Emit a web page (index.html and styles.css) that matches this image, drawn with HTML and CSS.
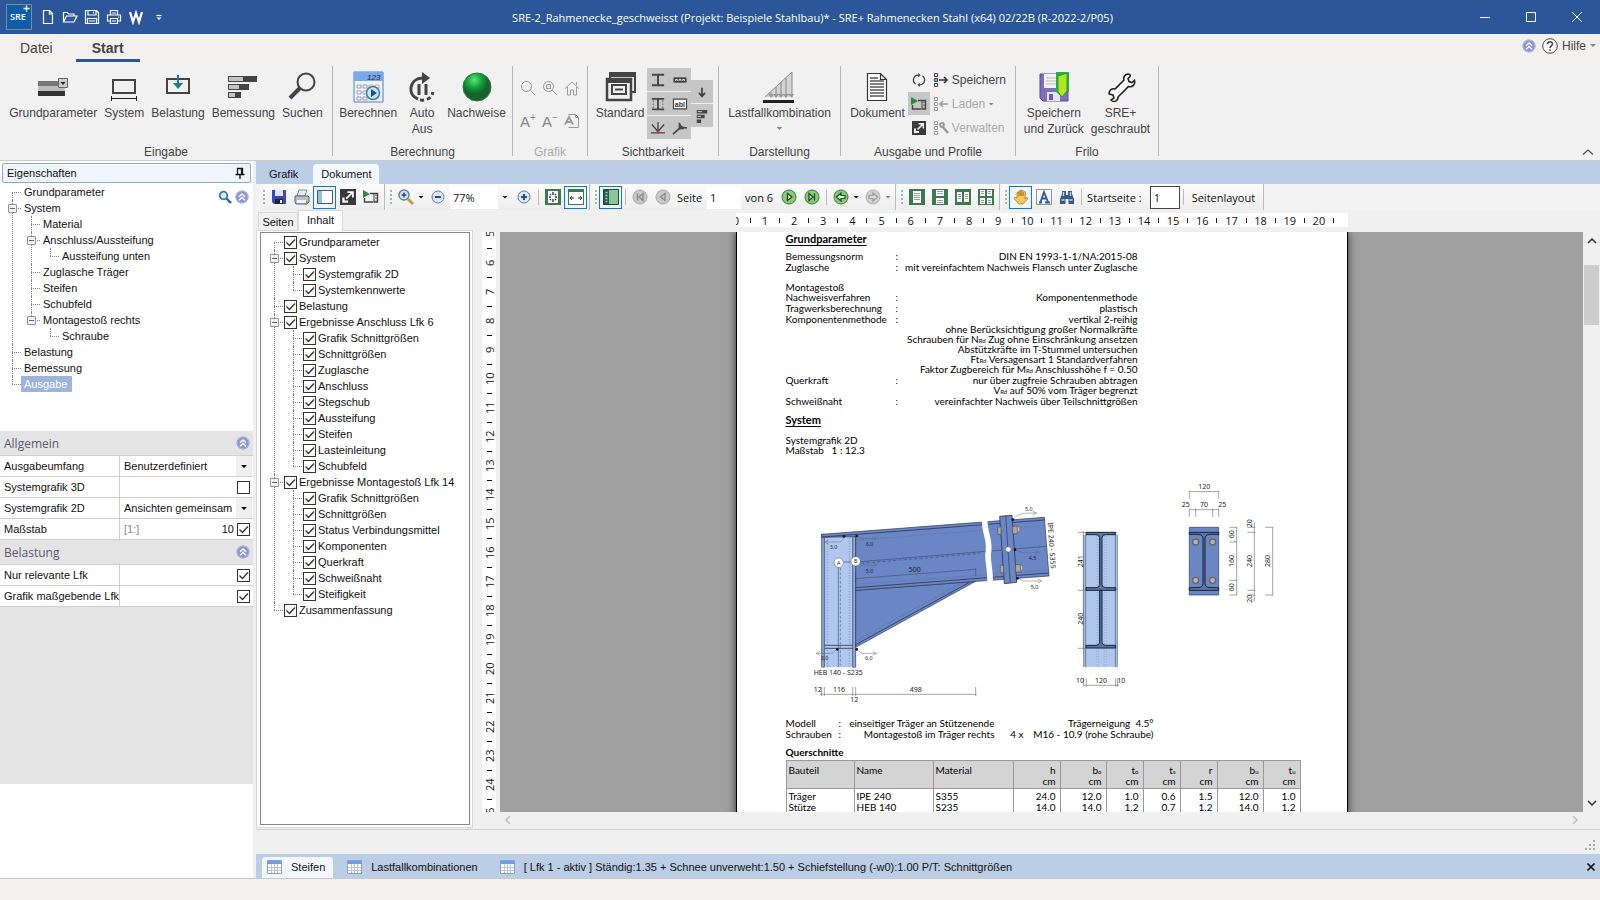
FILE: index.html
```html
<!DOCTYPE html>
<html lang="de">
<head>
<meta charset="utf-8">
<title>SRE+ Rahmenecken Stahl</title>
<link rel="stylesheet" href="styles.css">
</head>
<body>
<svg class="defs" aria-hidden="true">
  <symbol id="up2" viewBox="0 0 14 14"><circle cx="7" cy="7" r="6.5" fill="#8b97d3"/><circle cx="7" cy="7" r="6" fill="none" stroke="#a9b9e4"/><path d="M4 6.8 7 4l3 2.800M4 10.300 7 7.500l3 2.800" fill="none" stroke="#fff" stroke-width="1.400"/></symbol>
  <symbol id="grid" viewBox="0 0 16 14"><path d="M.5.5h14v13H.5z" fill="#fff" stroke="#8aa0c4"/><path d="M1 1h13v3H1z" fill="#6f9be8"/><path d="M1 7.500h13M1 10.500h13M4.500 4v9M7.500 4v9M10.500 4v9" stroke="#b8c4d8"/></symbol>
  <symbol id="play" viewBox="0 0 16 14"><path d="M0 0l7 4-7 4z" fill="#2a8a3a" stroke="none"/><path d="M1.500 8v4h9M7 3.500h7.500v8.500H11" fill="none" stroke="#444" stroke-width="1.400"/><path d="M11 3v9" stroke="#444"/><path d="M13 4.500v7" stroke="#444" stroke-dasharray="1.500 1.500"/></symbol>
  <symbol id="expand" viewBox="0 0 14 14"><path d="M0 0h14v14H0z" fill="#3a3a3a" stroke="none"/><path d="M2 7.500h2V10h3v2H2z" fill="#f4f4f4" stroke="none"/><path d="M5.500 8.500 11 3M6.500 2.700h4.800V7.500" fill="none" stroke="#fff" stroke-width="1.500"/></symbol>
</svg>

<header class="title">
  <svg class="logo" viewBox="0 0 26 26"><path d="M.5.5h25v25H.5z" fill="#0b5cad" stroke="#8a8a80"/><text x="4" y="16" font-size="9" font-weight="600" fill="#fff">SRE</text><path d="M20.500 1.500v6M17.500 4.500h6" stroke="#fff" stroke-width="1.300"/></svg>
  <nav class="quick">
    <button aria-label="Neu"><svg viewBox="0 0 16 16"><path d="M3.500 1.500h6l3 3v10h-9zM9.500 1.500v3.500h3" /></svg></button>
    <button aria-label="Öffnen"><svg viewBox="0 0 16 16"><path d="M1.500 13V3.500h4l1 1.500h5.500v2M1.500 13l3-6H15l-3 6z"/></svg></button>
    <button aria-label="Sichern"><svg viewBox="0 0 16 16"><path d="M1.500 1.500h11l2 2v11h-13zM4 1.500v4.500h8V1.500M3.500 14V9.500h9V14M9.500 2.500v2M5 12h6"/></svg></button>
    <button aria-label="Drucken"><svg viewBox="0 0 16 16"><path d="M4.500 6V1.500h7V6M4 12H1.500V6h13v6H12M4.500 9.500h7v5h-7zM6 12h4M6 4h4M12 8h1"/></svg></button>
    <button aria-label="Word"><svg viewBox="0 0 16 16"><path d="M2 3l3 10 3-9 3 9 3-10" stroke-width="2.200"/></svg></button>
    <button class="more" aria-label="Mehr"><svg viewBox="0 0 8 16"><path d="M1.500 6.500h5"/><path d="M1.500 8.500h5L4 11z" fill="#fff" stroke="none"/></svg></button>
  </nav>
  <h1>SRE-2_Rahmenecke_geschweisst (Projekt: Beispiele Stahlbau)* - SRE+ Rahmenecken Stahl (x64) 02/22B (R-2022-2/P05)</h1>
  <div class="win">
    <button aria-label="Minimieren"><svg viewBox="0 0 12 12"><path d="M1 6.500h10"/></svg></button>
    <button aria-label="Maximieren"><svg viewBox="0 0 12 12"><path d="M1.500 1.500h9v9h-9z"/></svg></button>
    <button aria-label="Schließen"><svg viewBox="0 0 12 12"><path d="M1 1l10 10M11 1 1 11"/></svg></button>
  </div>
</header>

<nav class="menu">
  <button>Datei</button><button class="on">Start</button>
  <div class="help"><svg class="i14"><use href="#up2"/></svg><svg class="i16" viewBox="0 0 16 16"><circle cx="8" cy="8" r="7.300" fill="#fff" stroke="#444"/><path d="M5.500 6.200C5.500 3 10.500 3 10.500 6c0 1.800-2.500 2-2.500 4M8 11.300v1.400" fill="none" stroke="#444" stroke-width="1.500"/></svg><button>Hilfe</button><i class="caret dim"></i></div>
</nav>

<section class="ribbon">
  <div class="grp g1"><div class="tools">
    <button><svg viewBox="0 0 32 32"><path d="M1 10h21v5H1z" fill="#777"/><path d="M1 15h27v5H1z" fill="#bdbdbd"/><path d="M1 20h27v5H1z" fill="#333"/><path d="M21.500 7.500h9v9h-9z" fill="#ccc" stroke="#666"/><path d="M23.500 11h5L26 14z" fill="#222"/></svg>Grundparameter</button>
    <button><svg viewBox="0 0 32 32"><path d="M5 9h22v13H5z" fill="none" stroke="#444" stroke-width="2"/><path d="M3.500 25v5M28.500 25v5M4 27.500h24" stroke="#222"/></svg>System</button>
    <button><svg viewBox="0 0 32 32"><path d="M5 8h22v14H5z" fill="none" stroke="#444" stroke-width="2"/><path d="M16 4v11" stroke="#188080" stroke-width="2"/><path d="M11 12h10l-5 6z" fill="#188080"/></svg>Belastung</button>
    <button><svg viewBox="0 0 32 32"><path d="M1 5h29v6H1zM1 13h21v6H1zM1 21h13v6H1z" fill="#444"/><path d="M2 6h14v4H2zM2 14h10v4H2zM2 22h6v4H2z" fill="#c4c4c4"/></svg>Bemessung</button>
    <button><svg viewBox="0 0 32 32"><circle cx="20" cy="11" r="8.500" fill="none" stroke="#444" stroke-width="2"/><path d="M14 17 4 27" stroke="#444" stroke-width="4"/></svg>Suchen</button>
  </div><h2>Eingabe</h2></div>
  <div class="grp g2"><div class="tools">
    <button><svg viewBox="0 0 32 32"><path d="M2 1h29v30H2z" fill="#eef4ff" stroke="#4a80cc"/><path d="M2 1h29v9H2z" fill="#78a8ee"/><text x="15" y="8.500" font-size="8" font-style="italic" fill="#124">123</text><path d="M5 14h4v3H5zM11 14h4v3h-4zM5 20h4v3H5zM11 20h4v3h-4zM5 26h4v3H5zM11 26h4v3h-4z" fill="#fff" stroke="#99a"/><path d="M17 14h4v3h-4zM23 14h4v3h-4z" fill="#fff" stroke="#e8a860"/><circle cx="21" cy="22" r="6.500" fill="#cfe6fa" stroke="#3a78b8" stroke-width="1.500"/><path d="M19 18l6 4-6 4z" fill="#1c4f90"/></svg>Berechnen</button>
    <button><svg viewBox="0 0 32 32"><path d="M12 28C1 24 3 8 16 7" fill="none" stroke="#444" stroke-width="3"/><path d="M16 1l8 6-8 6z" fill="#444"/><path d="M13 13v11M20 13v11" stroke="#444" stroke-width="3"/><path d="M14 29c8 1 12-3 13-8" fill="none" stroke="#444" stroke-width="3" stroke-dasharray="4 3"/></svg>Auto<br>Aus</button>
    <button><svg viewBox="0 0 32 32"><defs><radialGradient id="gr" cx=".4" cy=".25"><stop offset="0" stop-color="#5fe685"/><stop offset=".5" stop-color="#14a83c"/><stop offset="1" stop-color="#17622a"/></radialGradient></defs><circle cx="16" cy="16" r="14" fill="url(#gr)" stroke="#2b7a3c"/></svg>Nachweise</button>
  </div><h2>Berechnung</h2></div>
  <div class="grp g3"><div class="tools minis dimmed">
    <button aria-label="Zoom"><svg viewBox="0 0 16 16"><circle cx="6.500" cy="6.500" r="5" /><path d="M10 10l5 5"/></svg></button>
    <button aria-label="Zoom Fenster"><svg viewBox="0 0 16 16"><circle cx="6.500" cy="6.500" r="5"/><path d="M10 10l5 5M4.500 4.500h4v4h-4z"/></svg></button>
    <button aria-label="Alles"><svg viewBox="0 0 16 16"><path d="M1 8.500 8 2l7 6.500M3.500 7v8h3v-5h3v5h3V7M12.500 2v3"/></svg></button>
    <button class="aa">A<sup>+</sup></button><button class="aa">A<sup>−</sup></button>
    <button aria-label="Schrift"><svg viewBox="0 0 16 16"><path d="M4.500 1.500h7l3 3v10h-10M11.500 1.500v3h3"/><path d="M1 11.500 5 4l4 7.500M3 9h4" stroke-width="1.800"/></svg></button>
  </div><h2 class="dim">Grafik</h2></div>
  <div class="grp g4"><div class="tools">
    <button><svg viewBox="0 0 32 32"><path d="M6 2h25v19H6z" fill="none" stroke="#444" stroke-width="2"/><path d="M6 2h25v4H6z" fill="#444"/><path d="M3 8h24v21H3z" fill="#f1f1f1" stroke="#444" stroke-width="2.500"/><path d="M3 8h24v4H3z" fill="#444"/><path d="M8 14h14v9H8z" fill="none" stroke="#444" stroke-width="2"/><path d="M11 18.500h8" stroke="#444" stroke-width="2"/></svg>Standard</button>
    <div class="vis">
      <button class="on" aria-label="Profil"><svg viewBox="0 0 16 16"><path d="M1 2h14M1 14h14M8 2v12" stroke-width="2.200"/></svg></button>
      <button class="on" aria-label="Maße"><svg viewBox="0 0 16 16"><path d="M1 5.500h14v5H1z" fill="#444"/><path d="M3 9V7.500h2V9M7 9V7.500h2V9M11 9V7.500h2V9" stroke="#fff"/></svg></button>
      <button class="on" aria-label="Profil Bemaßung"><svg viewBox="0 0 16 16"><path d="M1 2h14M1 14h14M8 2v12" stroke-width="2"/><path d="M2.500 4v9M13.500 4v9" stroke-dasharray="1.500 2"/></svg></button>
      <button class="on" aria-label="Beschriftung"><svg viewBox="0 0 16 16"><path d="M.5 2.500h15v11H.5z" fill="#fff" stroke-width="1.300"/><text x="2" y="11" font-size="8" font-weight="bold" fill="#333" stroke="none">abl</text></svg></button>
      <button class="on" aria-label="Schnitt"><svg viewBox="0 0 16 16"><path d="M0 13.500h16M8 1v11M1 4l7 8 7-8" stroke-width="1.500"/><path d="M6 11h4l-2 4z" fill="#c33" stroke="none"/></svg></button>
      <button class="on" aria-label="Naht"><svg viewBox="0 0 16 16"><path d="M0 15 9 7l7 1" stroke-width="2"/><path d="M7 2v7h5z" fill="#444"/></svg></button>
    </div>
    <div class="vis one">
      <button class="on" aria-label="Last"><svg viewBox="0 0 16 16"><path d="M8 3v10M4.500 9 8 13l3.500-4" stroke-width="2"/></svg></button>
      <button class="on" aria-label="Ausnutzung"><svg viewBox="0 0 16 16"><path d="M2 1h12v4H2zM2 6.500h9v4H2zM2 12h5v4H2z" fill="#444" stroke="none"/><path d="M3 3h5M3 8.500h4"  stroke="#ddd"/></svg></button>
    </div>
  </div><h2>Sichtbarkeit</h2></div>
  <div class="grp g5"><div class="tools">
    <button><svg viewBox="0 0 32 32"><path d="M2 26 29 1v25z" fill="#d4d4d4"/><path d="M2 26 29 1M8 21v5M13 16v10M18 11v15M23 7v19M29 1v25" stroke="#888" fill="none"/><path d="M5 23l3 4 3-4zM10 23l3 4 3-4zM15 23l3 4 3-4zM20 23l3 4 3-4zM25 23l4 4 2-4z" fill="#999"/><path d="M0 29h31v3H0z" fill="#222"/></svg>Lastfallkombination<i class="caret dim"></i></button>
  </div><h2>Darstellung</h2></div>
  <div class="grp g6"><div class="tools">
    <button><svg viewBox="0 0 32 32"><path d="M6.500 2.500h13l6 6v21h-19zM19.500 2.500v6h6" fill="#fff" stroke="#333" stroke-width="1.200"/><path d="M9 7h8M9 10h14M9 13h14M9 16h14M9 19h14M9 22h14M9 25h14" stroke="#555" stroke-width="1.300"/></svg>Dokument</button>
    <div class="vis one top">
      <button aria-label="Aktualisieren"><svg viewBox="0 0 16 16"><path d="M7 2.500a5.500 5.500 0 0 0-3 10M9 13.500a5.500 5.500 0 0 0 3-10" stroke-width="1.500"/><path d="M7 0v5l3-2.500zM9 11v5l-3-2.500z" fill="#444" stroke="none"/></svg></button>
      <button class="on" aria-label="Ausgeben"><svg><use href="#play"/></svg></button>
      <button aria-label="Vollbild"><svg><use href="#expand"/></svg></button>
    </div>
    <div class="prof">
      <button><svg viewBox="0 0 16 16"><path d="M1.500 1.500h3v3h-3zM1.500 11.500h3v3h-3z" fill="#fff" stroke="#444"/><path d="M1.500 6.500h3v3h-3z" fill="#58b0e8" stroke="#444"/><path d="M6 8h8M11 5l3 3-3 3" fill="none" stroke="#333" stroke-width="1.600"/></svg>Speichern</button>
      <button class="dim"><svg viewBox="0 0 16 16"><path d="M1.500 1.500h3v3h-3zM1.500 11.500h3v3h-3zM1.500 6.500h3v3h-3z" fill="#fff" stroke="#999"/><path d="M7 8h8M10 5 7 8l3 3" fill="none" stroke="#999" stroke-width="1.600"/></svg>Laden<i class="caret dim"></i></button>
      <button class="dim"><svg viewBox="0 0 16 16"><path d="M1.500 1.500h3v3h-3zM1.500 11.500h3v3h-3zM1.500 6.500h3v3h-3z" fill="#fff" stroke="#999"/><path d="M9 6l6 7" stroke="#999" stroke-width="2.500"/><circle cx="9" cy="5" r="2" fill="none" stroke="#999" stroke-width="1.800"/></svg>Verwalten</button>
    </div>
  </div><h2>Ausgabe und Profile</h2></div>
  <div class="grp g7"><div class="tools">
    <button><svg viewBox="0 0 32 32"><path d="M2 3h28v27H5l-3-3z" fill="#7f6fb8" stroke="#5a4a98"/><path d="M6 3h16v14H6z" fill="#f2f2f8"/><path d="M8 7h12M8 10h12M8 13h12" stroke="#bbb"/><path d="M9 21h13v9H9z" fill="#e4e4ee"/><path d="M11 23h4v6h-4z" fill="#6a5aa8"/><path d="M18 1h13v20h-6z" fill="#2faa48"/><path d="M18 1v20l6 5V8l7-4V1z" fill="#2faa48"/><path d="M20 5l9-3v18l-5 6-4-5z" fill="#b4e61e" stroke="#22a040"/></svg>Speichern<br>und Zurück</button>
    <button><svg viewBox="0 0 32 32"><path d="M21 3.500c3-1 5 0 4 2l-2 2 1 3 3 1 2.500-2c1 4-2 7-6 6L13 26c0 4-4 6-7 3l3-2-1-3-4-1c0-4 3-6 6-5L19 9c-1-3 0-4 2-5.500z" fill="#fff" stroke="#222" stroke-width="1.600"/></svg>SRE+<br>geschraubt</button>
  </div><h2>Frilo</h2></div>
  <button class="fold" aria-label="Menüband einklappen"><svg viewBox="0 0 12 8"><path d="M1 6.500 6 2l5 4.500" fill="none" stroke="#555" stroke-width="1.300"/></svg></button>
</section>

<main class="work">
<aside class="props">
  <h2 class="cap">Eigenschaften<svg viewBox="0 0 12 12"><path d="M3.500 7V1.500h5V7M1.500 7.500h9M6 8v4M7.500 2v5" fill="none" stroke="#111" stroke-width="1.300"/></svg></h2>
  <div class="nav">
    <div class="find"><svg class="i14" viewBox="0 0 14 14"><circle cx="5.500" cy="5.500" r="3.800" fill="#dff0fc" stroke="#2f78c4" stroke-width="1.800"/><path d="M8.500 8.500 13 13" stroke="#2a5fa8" stroke-width="2.400"/></svg><svg class="i14"><use href="#up2"/></svg></div>
    <ul class="tree">
      <li><a href="#">Grundparameter</a></li>
      <li><button class="ex" aria-label="Zuklappen"></button><a href="#">System</a>
        <ul>
          <li><a href="#">Material</a></li>
          <li><button class="ex" aria-label="Zuklappen"></button><a href="#">Anschluss/Aussteifung</a><ul><li><a href="#">Aussteifung unten</a></li></ul></li>
          <li><a href="#">Zuglasche Träger</a></li>
          <li><a href="#">Steifen</a></li>
          <li><a href="#">Schubfeld</a></li>
          <li><button class="ex" aria-label="Zuklappen"></button><a href="#">Montagestoß rechts</a><ul><li><a href="#">Schraube</a></li></ul></li>
        </ul></li>
      <li><a href="#">Belastung</a></li>
      <li><a href="#">Bemessung</a></li>
      <li><a href="#" class="sel">Ausgabe</a></li>
    </ul>
  </div>
  <h3>Allgemein<svg class="i14"><use href="#up2"/></svg></h3>
  <div class="row"><label for="p1">Ausgabeumfang</label><div><select id="p1"><option>Benutzerdefiniert</option></select></div></div>
  <div class="row"><label for="p2">Systemgrafik 3D</label><div><input type="checkbox" id="p2"></div></div>
  <div class="row"><label for="p3">Systemgrafik 2D</label><div><select id="p3"><option>Ansichten gemeinsam</option></select></div></div>
  <div class="row"><label for="p4">Maßstab</label><div><span class="unit">[1:]</span><input class="num" aria-label="Maßstab Wert" value="10"><input type="checkbox" id="p4" checked></div></div>
  <h3>Belastung<svg class="i14"><use href="#up2"/></svg></h3>
  <div class="row"><label for="p5">Nur relevante Lfk</label><div><input type="checkbox" id="p5" checked></div></div>
  <div class="row"><label for="p6">Grafik maßgebende Lfk</label><div><input type="checkbox" id="p6" checked></div></div>
  <div class="void"></div>
</aside>

<section class="main">
  <nav class="tabs"><button>Grafik</button><button class="on">Dokument</button></nav>
  <div class="bar">
    <div class="tg"><i class="grip"></i>
      <button aria-label="Speichern"><svg viewBox="0 0 16 16"><path d="M1 1h14v14H3l-2-2z" fill="#3b49b8"/><path d="M4 1h8v6H4z" fill="#dfe6fa"/><path d="M4 10h8v5H4z" fill="#223"/><path d="M9 11h2v3H9z" fill="#fff"/></svg></button>
      <button aria-label="Drucken"><svg viewBox="0 0 16 16"><path d="M5 1h8l-2 6H3z" fill="#e4effc" stroke="#7a8aa0"/><path d="M1 7h13l1 1v5l-2 2H2l-1-2z" fill="#b9c0ca" stroke="#5c6470"/><path d="M3 11h9v3H3z" fill="#f2f2f2"/><path d="M12 12h2v2h-2z" fill="#6c3"/></svg></button>
      <button class="on" aria-label="Seitenleiste"><svg viewBox="0 0 16 16"><path d="M.5 1.500h15v13H.5z" fill="#fff" stroke="#555"/><path d="M1 2h4v12H1z" fill="#8cc4e0"/></svg></button>
      <button aria-label="Vollbild"><svg><use href="#expand"/></svg></button>
      <button aria-label="Ausgeben"><svg><use href="#play"/></svg></button>
    </div>
    <div class="tg"><i class="grip"></i>
      <button aria-label="Vergrößern"><svg viewBox="0 0 16 16"><circle cx="6" cy="6" r="5" fill="#d8e8f8" stroke="#6a7f9c" stroke-width="1.500"/><path d="M3.500 6h5M6 3.500v5" stroke="#234f90" stroke-width="1.500"/><path d="M10 10l5 5" stroke="#c89a3c" stroke-width="2.800"/></svg></button>
      <i class="caret"></i>
      <button aria-label="Kleiner"><svg viewBox="0 0 16 16"><circle cx="8" cy="8" r="6" fill="#dde8f6" stroke="#6a7890"/><path d="M5 8h6" stroke="#234f90" stroke-width="2"/></svg></button>
      <input class="z" aria-label="Zoom" value="77%"><i class="caret wide"></i>
      <button aria-label="Größer"><svg viewBox="0 0 16 16"><circle cx="8" cy="8" r="6" fill="#dde8f6" stroke="#6a7890"/><path d="M5 8h6M8 5v6" stroke="#234f90" stroke-width="2"/></svg></button>
      <i class="sep"></i>
      <button aria-label="Ganze Seite"><svg viewBox="0 0 16 16"><path d="M0 0h16v16H0z" fill="#3c7a4c"/><path d="M3 2h10v12H3z" fill="#fff"/><path d="M8 3v3M8 10v3M4 8h2M10 8h2M5 5l1 1M11 5l-1 1M5 11l1-1M11 11l-1-1" stroke="#333" stroke-width="1.400"/></svg></button>
      <button class="on" aria-label="Seitenbreite"><svg viewBox="0 0 16 16"><path d="M0 0h16v16H0z" fill="#3c7a4c"/><path d="M1 3h14v12H1z" fill="#fff"/><path d="M2 9h4M10 9h4M4 7 2 9l2 2M12 7l2 2-2 2" fill="none" stroke="#333"/></svg></button>
    </div>
    <div class="tg"><i class="grip"></i>
      <button class="on" aria-label="Gliederung"><svg viewBox="0 0 16 16"><path d="M.5.5h15v15H.5z" fill="#8fc49a" stroke="#1c4c30"/><path d="M1 1h5v14H1z" fill="#255c48"/><path d="M2.500 3.500h2M2.500 6.500h2M2.500 9.500h2M2.500 12.500h2" stroke="#9cc8e8" stroke-width="1.500"/></svg></button>
      <i class="sep"></i>
      <button aria-label="Erste Seite"><svg viewBox="0 0 16 16"><circle cx="8" cy="8" r="7" fill="#c8c8c8" stroke="#a8a8a8"/><path d="M5.500 4.500v7M11 4.500 7 8l4 3.500z" fill="none" stroke="#888" stroke-width="1.300"/></svg></button>
      <button aria-label="Vorige Seite"><svg viewBox="0 0 16 16"><circle cx="8" cy="8" r="7" fill="#c8c8c8" stroke="#a8a8a8"/><path d="M10 4.500 5.500 8l4.500 3.500z" fill="none" stroke="#888" stroke-width="1.300"/></svg></button>
      <label for="pg">Seite</label><input class="p" id="pg" value="1"><span>von 6</span>
      <button aria-label="Nächste Seite"><svg viewBox="0 0 16 16"><circle cx="8" cy="8" r="7" fill="#8cc878" stroke="#3c7a3c"/><path d="M6.500 4.500 11 8l-4.500 3.500z" fill="#dff2d4" stroke="#1c4c20" stroke-width="1.300"/></svg></button>
      <button aria-label="Letzte Seite"><svg viewBox="0 0 16 16"><circle cx="8" cy="8" r="7" fill="#8cc878" stroke="#3c7a3c"/><path d="M5 4.500 9 8l-4 3.500zM10.500 4.500v7" fill="#dff2d4" stroke="#1c4c20" stroke-width="1.300"/></svg></button>
      <i class="sep"></i>
      <button aria-label="Zurück"><svg viewBox="0 0 16 16"><circle cx="8" cy="8" r="7" fill="#8cc878" stroke="#3c7a3c"/><path d="M3.500 8 8 4v2.500h4v3H8V12z" fill="#eaf6e4" stroke="#1c4c20" stroke-width="1.200"/></svg></button><i class="caret"></i>
      <button aria-label="Vor"><svg viewBox="0 0 16 16"><circle cx="8" cy="8" r="7" fill="#cfcfcf" stroke="#b0b0b0"/><path d="M12.500 8 8 4v2.500H4v3h4V12z" fill="#ddd" stroke="#999" stroke-width="1.200"/></svg></button><i class="caret dim"></i>
    </div>
    <div class="tg"><i class="grip"></i>
      <button aria-label="Einzelseite"><svg viewBox="0 0 16 16"><path d="M0 0h16v16H0z" fill="#3c7a4c"/><path d="M4 2h8v12H4z" fill="#fff"/><path d="M5 4.500h6M5 6.500h6M5 8.500h6M5 10.500h6" stroke="#99a"/></svg></button>
      <button aria-label="Fortlaufend"><svg viewBox="0 0 16 16"><path d="M0 0h16v16H0z" fill="#3c7a4c"/><path d="M4 1h8v6H4zM4 9h8v6H4z" fill="#fff"/><path d="M5 2.500h6M5 4.500h6M5 11.500h6M5 13.500h6" stroke="#99a"/></svg></button>
      <button aria-label="Doppelseite"><svg viewBox="0 0 16 16"><path d="M0 0h16v16H0z" fill="#3c7a4c"/><path d="M2 3h5v10H2zM9 3h5v10H9z" fill="#fff"/><path d="M3 5.500h3M3 7.500h3M3 9.500h3M10 5.500h3M10 7.500h3M10 9.500h3" stroke="#99a"/></svg></button>
      <button aria-label="Vier Seiten"><svg viewBox="0 0 16 16"><path d="M0 0h16v16H0z" fill="#3c7a4c"/><path d="M2 1h5v6H2zM9 1h5v6H9zM2 9h5v6H2zM9 9h5v6H9z" fill="#fff"/><path d="M3 2.500h3M3 4.500h3M10 2.500h3M10 4.500h3M3 11.500h3M3 13.500h3M10 11.500h3M10 13.500h3" stroke="#99a"/></svg></button>
    </div>
    <div class="tg"><i class="grip"></i>
      <button class="on" aria-label="Hand"><svg viewBox="0 0 16 16"><path d="M4 9V3.500q1-1 2 0V7 2q1-1 2 0v5-5.500q1-1 2 0V7l.5-4q1-1 2 0l-.5 7 1.500-1.500q1.500 0 1 1.500L10 15H6L1 9.500q0-1.500 1.500-1z" fill="#f4c860" stroke="#b07818" stroke-width=".8"/></svg></button>
      <button aria-label="Text wählen"><svg viewBox="0 0 16 16"><path d="M.5.5h15v15H.5z" fill="none" stroke="#333" stroke-dasharray="1 1"/><path d="M3 13.500h3M9 13.500h5M4.500 13 8 3l4 10M6 9.500h4.500" fill="none" stroke="#2c5ca8" stroke-width="1.800"/></svg></button>
      <button aria-label="Suchen"><svg viewBox="0 0 16 16"><path d="M3 2h4v4h2V2h4v3l2 5v5h-5.500v-5h-3v5H1v-5l2-5z" fill="#35588f"/><path d="M2.500 11h3M10.500 11h3M4.500 3v4M11.500 3v4" stroke="#c8daf2" stroke-width="1.400"/></svg></button>
      <i class="sep"></i><label for="sp">Startseite :</label><input class="s" id="sp" value="1"><i class="sep"></i><span>Seitenlayout</span>
    </div>
  </div>

  <div class="body">
    <div class="side">
      <nav class="stabs"><button>Seiten</button><button class="on">Inhalt</button></nav>
      <div class="sheet"><div class="toc">
        <ul class="tree">
          <li><label><input type="checkbox" checked>Grundparameter</label></li>
          <li><button class="ex" aria-label="Zuklappen"></button><label><input type="checkbox" checked>System</label>
            <ul><li><label><input type="checkbox" checked>Systemgrafik 2D</label></li><li><label><input type="checkbox" checked>Systemkennwerte</label></li></ul></li>
          <li><label><input type="checkbox" checked>Belastung</label></li>
          <li><button class="ex" aria-label="Zuklappen"></button><label><input type="checkbox" checked>Ergebnisse Anschluss Lfk 6</label>
            <ul>
              <li><label><input type="checkbox" checked>Grafik Schnittgrößen</label></li>
              <li><label><input type="checkbox" checked>Schnittgrößen</label></li>
              <li><label><input type="checkbox" checked>Zuglasche</label></li>
              <li><label><input type="checkbox" checked>Anschluss</label></li>
              <li><label><input type="checkbox" checked>Stegschub</label></li>
              <li><label><input type="checkbox" checked>Aussteifung</label></li>
              <li><label><input type="checkbox" checked>Steifen</label></li>
              <li><label><input type="checkbox" checked>Lasteinleitung</label></li>
              <li><label><input type="checkbox" checked>Schubfeld</label></li>
            </ul></li>
          <li><button class="ex" aria-label="Zuklappen"></button><label><input type="checkbox" checked>Ergebnisse Montagestoß Lfk 14</label>
            <ul>
              <li><label><input type="checkbox" checked>Grafik Schnittgrößen</label></li>
              <li><label><input type="checkbox" checked>Schnittgrößen</label></li>
              <li><label><input type="checkbox" checked>Status Verbindungsmittel</label></li>
              <li><label><input type="checkbox" checked>Komponenten</label></li>
              <li><label><input type="checkbox" checked>Querkraft</label></li>
              <li><label><input type="checkbox" checked>Schweißnaht</label></li>
              <li><label><input type="checkbox" checked>Steifigkeit</label></li>
            </ul></li>
          <li><label><input type="checkbox" checked>Zusammenfassung</label></li>
        </ul>
      </div></div>
    </div>
    <div class="viewer">
      <div class="hr"><div class="hrin"><b>0</b><i></i><b>1</b><i></i><b>2</b><i></i><b>3</b><i></i><b>4</b><i></i><b>5</b><i></i><b>6</b><i></i><b>7</b><i></i><b>8</b><i></i><b>9</b><i></i><b>10</b><i></i><b>11</b><i></i><b>12</b><i></i><b>13</b><i></i><b>14</b><i></i><b>15</b><i></i><b>16</b><i></i><b>17</b><i></i><b>18</b><i></i><b>19</b><i></i><b>20</b><i></i></div></div>
      <div class="vr"><div class="vrin"><b>5</b><i></i><b>6</b><i></i><b>7</b><i></i><b>8</b><i></i><b>9</b><i></i><b>10</b><i></i><b>11</b><i></i><b>12</b><i></i><b>13</b><i></i><b>14</b><i></i><b>15</b><i></i><b>16</b><i></i><b>17</b><i></i><b>18</b><i></i><b>19</b><i></i><b>20</b><i></i><b>21</b><i></i><b>22</b><i></i><b>23</b><i></i><b>24</b><i></i><b>25</b></div></div>
      <div class="canvas">
        <article class="page">
          <h2>Grundparameter</h2>
          <dl>
            <dt>Bemessungsnorm</dt><dd>DIN EN 1993-1-1/NA:2015-08</dd>
            <dt>Zuglasche</dt><dd>mit vereinfachtem Nachweis Flansch unter Zuglasche</dd>
          </dl>
          <p class="sub">Montagestoß</p>
          <dl>
            <dt>Nachweisverfahren</dt><dd>Komponentenmethode</dd>
            <dt>Tragwerksberechnung</dt><dd>plastisch</dd>
            <dt>Komponentenmethode</dt><dd>vertikal 2-reihig<br>ohne Berücksichtigung großer Normalkräfte<br>Schrauben für N<sub>Rd</sub> Zug ohne Einschränkung ansetzen<br>Abstützkräfte im T-Stummel untersuchen<br>Ft<sub>Rd</sub> Versagensart 1 Standardverfahren<br>Faktor Zugbereich für M<sub>Rd</sub> Anschlusshöhe f = 0.50</dd>
            <dt>Querkraft</dt><dd>nur über zugfreie Schrauben abtragen<br>V<sub>Rd</sub> auf 50% vom Träger begrenzt</dd>
            <dt>Schweißnaht</dt><dd>vereinfachter Nachweis über Teilschnittgrößen</dd>
          </dl>
          <h2>System</h2>
          <p>Systemgrafik 2D<br>Maßstab &nbsp; 1 : 12.3</p>
          <svg class="draw" viewBox="18 0 1602 720" role="img" aria-label="Systemgrafik 2D">
            <g stroke="#2c3850" stroke-width="2">
              <path d="M125 190h102v399H125z" fill="#b0c8ee" stroke="none"/>
              <path d="M125 190h8v399h-8zM218 190h9v399h-9z" fill="#8ea9d8"/>
              <path d="M133 523h85M133 532h85" stroke-width="2.500"/>
              <path d="M142 200v389M208 200v389" stroke="#6f86b4" stroke-dasharray="4 4"/>
              <path d="M181 278v311" stroke="#50648c" stroke-dasharray="8 5"/><path d="M175 275v314" stroke="#44587e"/>
              <path d="M125 589h102" stroke="#fff" stroke-dasharray="5 4"/>
              <path d="M227 358 587 331 227 529z" fill="#6a86c4"/>
              <path d="M227 521 572 332" stroke-width="2.500"/><path d="M227 510 545 336" stroke="#50689c" stroke-dasharray="4 4"/>
              <path d="M125 190 793 139 807 315 227 358V197L125 199z" fill="#6a86c4"/>
              <path d="M125 198 794 147M227 350 806 306" stroke-width="2.500"/>
              <path d="M230 207 795 164M230 340 800 297" stroke="#50689c" stroke-dasharray="4 5"/>
              <path d="M190 273h40L800 226" fill="none" stroke="#3c5080"/><path d="M227 278 600 247" stroke="#3c5080" stroke-dasharray="10 6"/>
              <path d="M614 146c-2 40 20 60 10 105 0 30 8 50 6 84" fill="none" stroke="#fff" stroke-width="17"/>
              <path d="M659 136l37-3 14 201-37 4z" fill="#6a86c4" stroke-width="2.500"/><path d="M677 135l14 201"/>
              <path d="M653 168h10v22h-10zM698 166h14v22h-14zM661 283h10v22h-10zM707 281h14v22h-14z" fill="#b0aaa4" stroke="#555"/>
              <path d="M713 168h6v14h-6zM722 284h6v14h-6z" fill="#ccc" stroke="#777"/>
              <g fill="none" stroke="#667" stroke-width="1.500">
                <path d="M192 196c-4 14-10 17-20 17h-36M229 194l16 8h42M229 270l16 12h42M700 146c10-16 20-20 68-20M705 236l20 8h50M712 322l18 8h52M172 535l-16 12h-45M229 535l16 12h42"/>
                <path d="M146 206l-12 7 12 7M278 196l12 6-12 6M278 276l12 6-12 6M758 120l12 6-12 6M766 238l12 6-12 6M774 324l12 6-12 6M120 541l-12 6 12 6M278 541l12 6-12 6"/>
              </g>
              <path d="M225 323 587 295M227 310v25M587 290v26" stroke="#33456c" stroke-width="1.500"/>
            </g>
            <g fill="#fff" stroke="#556" stroke-width="1.500"><circle cx="176" cy="275" r="14"/><circle cx="227" cy="271" r="14"/><circle cx="685" cy="235" r="8"/></g>
            <g fill="#111"><circle cx="192" cy="196" r="4"/><circle cx="230" cy="195" r="4"/><circle cx="698" cy="146" r="4"/><circle cx="705" cy="236" r="4"/><circle cx="712" cy="322" r="4"/><circle cx="172" cy="535" r="4"/><circle cx="230" cy="535" r="4"/></g>
            <g class="t14"><text x="171" y="281">A</text><text x="222" y="277">B</text><text x="149" y="233">3,0</text><text x="257" y="226">6,0</text><text x="257" y="305">5,0</text><text x="735" y="119">5,0</text><text x="746" y="266">4,5</text><text x="752" y="353">5,0</text><text x="122" y="568">3,0</text><text x="255" y="568">6,0</text></g>
            <g class="t19"><text x="101" y="612">HEB 140 - S235</text><text transform="translate(803 155)rotate(86)">IPE 240 - S355</text><text x="386" y="303">500</text></g>
            <path d="M120 670h470M125 648v27M133 648v27M218 648v27M227 648v27M587 648v27" fill="none" stroke="#777" stroke-width="2"/>
            <g class="t19"><text x="101" y="664">12</text><text x="159" y="664">116</text><text x="389" y="664">498</text><text x="211" y="694">12</text></g>

            <g transform="translate(840 0)">
              <path d="M71 192h101v397H71z" fill="#b0c8ee"/><path d="M71 192v397M77 192v397M166 192v397M172 192v397" stroke="#44587e" stroke-width="2"/>
              <path d="M110 195v394M115 195v394M133 195v394M139 195v394" stroke="#8fa6d0" stroke-width="2" stroke-dasharray="4 4"/>
              <path d="M71 589h101" stroke="#fff" stroke-width="3" stroke-dasharray="5 4"/>
              <path d="M78 184h89v7h-30q-10 0-11 9v141q1 9 11 9h30v8H78v-8h30q10 0 11-9V200q-1-9-11-9H78zM119 358h7v156q1 9 11 9h30v8H78v-8h30q10 0 11-9z" fill="#5c76a8" stroke="#16202c" stroke-width="3"/>
              <path d="M53 184h22M53 358h22M53 532h22M70 180v356M72 643h105M71 622v25M79 622v25M167 622v25M173 622v25" fill="none" stroke="#777" stroke-width="2"/>
              <path d="M388 169h88v203h-88z" fill="#6a86c4" stroke="#2c3850" stroke-width="2"/>
              <path d="M388 184h88v6h-26q-15 1-15 12v136q1 11 15 12h26v8h-88v-8h26q15-1 15-12V202q-1-11-15-12h-26z" fill="#5c76a8" stroke="#16202c" stroke-width="3"/>
              <g fill="#b8b4b0" stroke="#666" stroke-width="4"><circle cx="407" cy="213" r="9"/><circle cx="458" cy="213" r="9"/><circle cx="407" cy="328" r="9"/><circle cx="458" cy="328" r="9"/></g>
              <path d="M388 62h88M388 58v25M476 58v25M388 116h88M388 112v25M407 112v25M458 112v25M476 112v25M530 169v203M508 169h24M508 213h24M508 328h24M508 372h24M583 155v236M562 169h24M562 184h24M562 358h24M562 372h24M638 169v203M616 169h24M616 372h24" fill="none" stroke="#777" stroke-width="2"/>
              <g class="t19"><text x="415" y="54">120</text><text x="365" y="109">25</text><text x="420" y="109">70</text><text x="475" y="109">25</text>
              <text x="48" y="636">10</text><text x="105" y="636">120</text><text x="172" y="636">10</text>
              <text transform="translate(69 289)rotate(-90)">241</text><text transform="translate(69 461)rotate(-90)">240</text>
              <text transform="translate(523 202)rotate(-90)">60</text><text transform="translate(523 288)rotate(-90)">160</text><text transform="translate(523 361)rotate(-90)">60</text>
              <text transform="translate(577 169)rotate(-90)">20</text><text transform="translate(577 288)rotate(-90)">240</text><text transform="translate(577 395)rotate(-90)">20</text><text transform="translate(631 288)rotate(-90)">280</text></g>
            </g>
          </svg>
          <div class="model">
            <span>Modell</span><span>:</span><span>einseitiger Träger an Stützenende</span><span></span><span>Trägerneigung &nbsp;4.5°</span>
            <span>Schrauben</span><span>:</span><span>Montagestoß im Träger rechts</span><span>4 x</span><span>M16 - 10.9 (rohe Schraube)</span>
          </div>
          <h3>Querschnitte</h3>
          <table>
            <thead><tr><th>Bauteil</th><th>Name</th><th>Material</th><th>h<br>cm</th><th>b<sub>o</sub><br>cm</th><th>t<sub>o</sub><br>cm</th><th>t<sub>s</sub><br>cm</th><th>r<br>cm</th><th>b<sub>u</sub><br>cm</th><th>t<sub>u</sub><br>cm</th></tr></thead>
            <tbody><tr><td>Träger</td><td>IPE 240</td><td>S355</td><td>24.0</td><td>12.0</td><td>1.0</td><td>0.6</td><td>1.5</td><td>12.0</td><td>1.0</td></tr>
            <tr><td>Stütze</td><td>HEB 140</td><td>S235</td><td>14.0</td><td>14.0</td><td>1.2</td><td>0.7</td><td>1.2</td><td>14.0</td><td>1.2</td></tr></tbody>
          </table>
        </article>
      </div>
      <div class="vs"><svg viewBox="0 0 10 6"><path d="M1 5l4-4 4 4"/></svg><i></i><svg viewBox="0 0 10 6"><path d="M1 1l4 4 4-4"/></svg></div>
      <div class="hs"><svg viewBox="0 0 6 10"><path d="M5 1 1 5l4 4"/></svg><svg viewBox="0 0 6 10"><path d="M1 1l4 4-4 4"/></svg></div>
    </div>
  </div>
  <div class="gap"><svg viewBox="0 0 12 12"><path d="M9 2h2v2H9zM5 6h2v2H5zM9 6h2v2H9zM1 10h2v2H1zM5 10h2v2H5zM9 10h2v2H9z" fill="#aaa"/></svg></div>
  <nav class="docs">
    <button class="on"><svg><use href="#grid"/></svg>Steifen</button>
    <button><svg><use href="#grid"/></svg>Lastfallkombinationen</button>
    <button><svg><use href="#grid"/></svg>[ Lfk 1 - aktiv ] Ständig:1.35 + Schnee unverweht:1.50 + Schiefstellung (-w0):1.00 P/T: Schnittgrößen</button>
    <button class="x" aria-label="Schließen"><svg viewBox="0 0 10 10"><path d="M1.500 1.500l7 7M8.500 1.500l-7 7" stroke="#111" stroke-width="1.700"/></svg></button>
  </nav>
</section>
</main>
<footer class="status"></footer>
</body>
</html>
```
FILE: styles.css
```css
*{box-sizing:border-box}
body{margin:0;height:100vh;display:flex;flex-direction:column;overflow:hidden;background:#f0f0f0;color:#111;font:11px "Liberation Sans",sans-serif}
button,input,select{font:inherit;color:inherit;border:0;background:none;padding:0;margin:0;border-radius:0}
h1,h2,h3,p,ul,dl,dd{margin:0;padding:0;font-weight:normal}
svg{display:block;flex:none}
a{color:inherit;text-decoration:none}
.defs{display:none}
.i14{width:14px;height:14px}
.i16{width:16px;height:16px}
.caret{flex:none;width:6px;height:3px;background:#111;clip-path:polygon(0 0,100% 0,50% 100%)}
.caret.dim{background:#888}

.title{flex:none;height:34px;display:flex;align-items:center;background:#2b579a;color:#fff;padding-left:6px}
.logo{width:26px;height:26px;font-family:"Open Sans",sans-serif}
.quick{display:flex;gap:6px;margin-left:8px}
.quick svg{width:16px;height:16px;fill:none;stroke:#fff;stroke-width:1.2}
.quick .more{margin-left:5px}
.quick .more svg{width:8px}
.title h1{flex:1;text-align:center;font:11px "Open Sans",sans-serif;white-space:nowrap}
.win{display:flex}
.win button{width:46px;height:34px;display:grid;place-items:center}
.win svg{width:12px;height:12px;fill:none;stroke:#fff}

.menu{flex:none;height:30px;display:flex;background:#f3f1ee;color:#444;font:14px "Liberation Sans",sans-serif;padding-left:4px}
.menu>button{height:28px;padding:3px 16px 0;border-bottom:3px solid transparent}
.menu>button.on{font-weight:bold;border-color:#2b579a;margin-left:7px}
.help{margin-left:auto;display:flex;align-items:center;gap:4px;font-size:12px;padding:0 4px 7px 0}
.help .i14{margin-right:2px}

.ribbon{flex:none;height:97px;display:flex;background:#f1f1f1;border-bottom:1px solid #cfccc8;color:#444;font:12px/16px "Liberation Sans",sans-serif}
.grp{flex:none;position:relative;display:flex;flex-direction:column;margin:2px 0 4px;border-right:1px solid #b5b5b5}
.grp h2{font-size:12px;text-align:center;margin-top:auto;line-height:8px}
.dim{color:#aaa}
.g1{width:333px}.g2{width:180px}.g3{width:75px}.g4{width:131px}.g5{width:122px}.g6{width:175px}.g7{width:143px}
.tools{display:flex;justify-content:center;gap:7px;height:72px;align-items:flex-start}
.tools>button{display:flex;flex-direction:column;align-items:center;padding-top:5px}
.tools>button>svg{width:32px;height:32px;margin-bottom:2px}
.tools>button>.caret{margin-top:6px}
.g2 .tools{gap:9px}
.minis{flex-wrap:wrap;gap:0;padding:6px 4px 0}
.minis>button{width:22px;height:32px;padding:8px 0 0}
.minis>button>svg{width:16px;height:16px;fill:none;stroke:#999}
.minis .aa{display:block;color:#888;font-size:15px;padding:2px 0 0}
.minis sup{font-size:10px;line-height:1px}
.g4 .tools,.g6 .tools{gap:3px}
.g4 .tools{padding-left:3px}
.vis{display:grid;grid-template-columns:22px 22px;row-gap:1px;margin-top:2px;background:#f1f1f1}
.vis.one{grid-template-columns:22px;margin:14px 0 0 -3px}
.vis.one.top{margin:2px 0 0}
.vis button{height:23px;display:grid;place-items:center}
.vis .on{background:#c6c6c6}
.vis svg{width:16px;height:14px;fill:none;stroke:#444}
.prof{display:flex;flex-direction:column;padding-top:2px}
.prof button{height:24px;display:flex;align-items:center;gap:3px}
.prof svg{width:16px;height:16px}
.fold{margin:auto 6px 4px auto}
.fold svg{width:12px;height:8px}

.work{flex:1;min-height:0;display:flex;border-bottom:1px solid #c8c8c8}
.props{flex:none;width:253px;margin-right:3px;background:#fff}
.cap{display:flex;justify-content:space-between;align-items:center;height:20px;margin:2px 2px 1px;padding:0 4px;border:1px solid #86abdf;border-radius:2px;background:#eff6fe;font-size:11px}
.cap svg{width:12px;height:12px}
.nav{height:247px;position:relative;padding-left:12px}
.find{position:absolute;right:4px;top:6px;display:flex;gap:3px}
.tree,.tree ul{list-style:none}
.tree li{position:relative;padding-left:9px;line-height:16px;white-space:nowrap}
.tree ul{margin-left:10px}
.tree li::before{content:"";position:absolute;left:0;top:0;bottom:0;border-left:1px dotted #808080}
.tree li:last-child::before{bottom:auto;height:8px}
.tree>li:first-child::before{top:8px}
.tree li::after{content:"";position:absolute;left:0;top:8px;width:9px;border-top:1px dotted #808080}
.tree a{display:inline-block;height:16px;padding:0 3px;vertical-align:top}
.tree .sel{background:#9db4dd;color:#fff;padding-right:5px}
.ex{position:absolute;z-index:1;left:-4px;top:4px;width:9px;height:9px;border:1px solid #919191;border-radius:1px;background:linear-gradient(#4b63a7,#4b63a7) center/5px 1px no-repeat #f4f4f4}
.tree label{display:flex;align-items:center;height:16px;gap:2px;padding-left:1px}
input[type=checkbox]{appearance:none;flex:none;width:13px;height:13px;border:1px solid #333;background:#fff}
input[type=checkbox]:checked{background:#fff url("data:image/svg+xml,%3Csvg xmlns='http://www.w3.org/2000/svg' viewBox='0 0 11 11'%3E%3Cpath d='M1.5 5.5l3 3 5.500-6' fill='none' stroke='%23333' stroke-width='1.300'/%3E%3C/svg%3E") center/11px no-repeat}
.props h3{display:flex;align-items:center;justify-content:space-between;height:25px;padding:0 3px 0 4px;background:#e4e4e4;border-bottom:1px solid #cfcfcf;color:#5a5a70;font:12px "Open Sans",sans-serif}
.row{display:grid;grid-template-columns:120px minmax(0,1fr);height:21px;border-bottom:1px solid #cfcfcf;line-height:20px;white-space:nowrap}
.row label{padding-left:4px;border-right:1px solid #cfcfcf}
.row>div{display:flex;align-items:center;justify-content:flex-end;padding:0 3px 0 4px}
.row select{flex:1;min-width:0;height:20px;margin-right:-2px;appearance:none;background:url("data:image/svg+xml,%3Csvg xmlns='http://www.w3.org/2000/svg' viewBox='0 0 16 20'%3E%3Cpath d='M0 0h16v20H0z' fill='%23f0f0f0'/%3E%3Cpath d='M5 9h6l-3 3z' fill='%23000'/%3E%3C/svg%3E") right/16px 20px no-repeat}
.unit{color:#888}
.num{flex:1;min-width:0;text-align:right;padding-right:3px}
.void{height:177px;background:#e4e4e4}

.main{flex:1;min-width:0;display:flex;flex-direction:column}
.tabs{flex:none;height:23px;display:flex;align-items:flex-end;background:#bccde6;padding-left:3px}
.tabs button{height:20px;padding:0 8px 0 10px}
.tabs .on{background:#f3f8fe;border-radius:4px 4px 0 0;padding:0 8px;margin-left:7px}
.bar{flex:none;height:26px;display:flex;align-items:center;padding-left:4px;font:11px "Open Sans",sans-serif;background:#f3f3f3}
.tg{display:flex;align-items:center;height:26px;padding-right:2px;margin-right:2px;border-right:1px solid #bbb;background:linear-gradient(#fcfcfc,#ededed)}
.grip{width:2px;height:15px;margin:0 2px 0 3px;background:repeating-linear-gradient(#b0b0b0 0 2px,transparent 2px 4px)}
.bar button{flex:none;width:23px;height:23px;display:grid;place-items:center}
.bar button.on{border:1px solid #1177d0;background:#eef5fc}
.bar svg{width:16px;height:16px}
.bar .caret{margin:0 2px 0 1px}
.bar .wide{margin:0 4px}
.sep{width:1px;height:16px;background:#bbb;margin:0 2px 0 3px}
.bar input{height:23px;background:#fff;padding-left:3px}
.z{width:48px;margin-left:1px}
.p{width:34px;margin:0 4px 0 5px}
.bar label{margin-left:3px}
.bar span{margin-right:4px}
.bar .s{width:30px;border:1px solid #444;margin-left:8px}
.bar .sep+span{margin:0 6px}

.body{flex:1;min-height:0;display:flex;border-bottom:1px solid #cfcfcf;padding-bottom:1px}
.side{flex:none;width:217px;display:flex;flex-direction:column}
.stabs{flex:none;height:20px;display:flex;align-items:flex-end;padding-left:2px}
.stabs button{height:18px;width:40px;border:1px solid #d8d8d8;border-bottom:0}
.stabs .on{height:21px;width:45px;background:#fff;margin-bottom:-1px;position:relative;padding-bottom:3px}
.sheet{flex:1;min-height:0;border:1px solid #d8d8d8;background:#fff;padding:1px 2px 2px 3px;display:flex}
.toc{flex:1;border:1px solid #828790;padding:1px 0 0 13px}

.viewer{flex:1;min-width:0;display:grid;grid-template:22px 1fr 16px/18px 1fr 17px;padding-left:9px}
.hr{grid-column:2;padding:3px 0 5px;display:flex;justify-content:center}
.hrin{width:612px;background:#fff;overflow:hidden;display:flex;align-items:center;font:11px "Open Sans",sans-serif}
.hrin b,.hrin i{flex:1;display:flex;justify-content:center;font-weight:normal;min-width:0}
.hrin b:first-child{margin-left:-7px}
.hrin i:last-child{margin-right:7px}
.hrin i::before{content:"";width:1px;height:5px;background:#111}
.vr{grid-column:1;grid-row:2;width:14px;background:#fff;overflow:hidden;min-height:0}
.vrin{margin-top:-6px;font:11px "Open Sans",sans-serif}
.vrin b,.vrin i{display:flex;align-items:center;justify-content:center;height:15px;font-weight:normal;font-style:normal}
.vrin i{height:14px}
.vrin b{writing-mode:vertical-rl;transform:rotate(180deg);width:14px}
.vrin i::before{content:"";width:5px;height:1px;background:#111}
.canvas{grid-column:2;grid-row:2;min-height:0;overflow:hidden;background:#a0a0a0;display:flex;justify-content:center;align-items:flex-start}
.page{flex:none;width:612px;height:900px;border:solid #000;border-width:0 1px;background:#fff;box-shadow:0 0 8px rgba(0,0,0,.7);padding:0 0 0 49px;font:10px/10px "Lato",sans-serif;color:#000}
.page h2{font-size:11px;font-weight:bold;line-height:14px;text-decoration:underline;text-underline-offset:2px}
.page dl{width:352px;display:grid;grid-template-columns:109px 1fr;margin-top:5px;row-gap:1px}
.page dd{text-align:right;position:relative}
.page dd::before{content:":";position:absolute;left:1px}
.page sub{font-size:6px;line-height:1px;vertical-align:baseline}
.page .sub{margin-top:10px}
.page .sub+dl{margin-top:0}
.page dl+h2{margin:7px 0 8px}
.draw{width:534px;height:240px;margin-top:16px;font-family:"Noto Sans",sans-serif}
.t14{font-size:16px;fill:#222}
.t19{font-size:21px;fill:#222}
.model{display:grid;grid-template-columns:53px 10px 146px 29px 130px;row-gap:1px;margin-top:7px;white-space:nowrap}
.model span:nth-child(5n+3),.model span:nth-child(5n+4),.model span:nth-child(5n){text-align:right}
.page h3{font-size:10px;font-weight:bold;line-height:12px;margin:7px 0 2px}
.page table{width:514px;table-layout:fixed;border-collapse:collapse;border:1px solid #999}
.page th,.page td{font-weight:normal;text-align:right;padding:0 4px 0 2px;border:solid #999;border-width:0 1px;line-height:11px;vertical-align:top}
.page th{background:#d4d4d4;width:37px;padding-top:4px;padding-bottom:1px;border-bottom:1px solid #999}
.page th:nth-child(-n+3),.page td:nth-child(-n+3){text-align:left}
.page th:nth-child(1){width:68px}
.page th:nth-child(2){width:79px}
.page th:nth-child(3){width:80px}
.page th:nth-child(4){width:47px}
.page th:nth-child(5),.page th:nth-child(9){width:46px}
.page tbody tr:first-child td{padding-top:2px}
.vs{grid-column:3;grid-row:2;display:flex;flex-direction:column;align-items:center;padding:6px 0}
.vs svg,.hs svg{width:10px;height:6px;fill:none;stroke:#333;stroke-width:1.5}
.vs i{width:15px;height:60px;margin:21px 0 auto;background:#cdcdcd}
.hs{grid-column:2;grid-row:3;display:flex;justify-content:space-between;align-items:center;padding:0 5px}
.hs svg{width:6px;height:10px;stroke:#bbb}
.gap{flex:none;height:24px;display:flex;justify-content:flex-end;align-items:flex-end;padding:4px}
.gap svg{width:12px;height:12px}
.docs{flex:none;height:24px;display:flex;align-items:flex-end;background:#bccde6;padding-left:6px}
.docs button{height:21px;display:flex;align-items:center;gap:8px;padding:0 8px 2px 5px;margin-right:9px;white-space:nowrap}
.docs svg{width:16px;height:14px}
.docs .on{background:#f3f8fe;border-radius:4px 4px 0 0}
.docs .x{margin:0 4px 0 auto;padding:0 0 2px}
.docs .x svg{width:10px;height:10px}
.status{flex:none;height:21px;background:#f3f1ee}
```
